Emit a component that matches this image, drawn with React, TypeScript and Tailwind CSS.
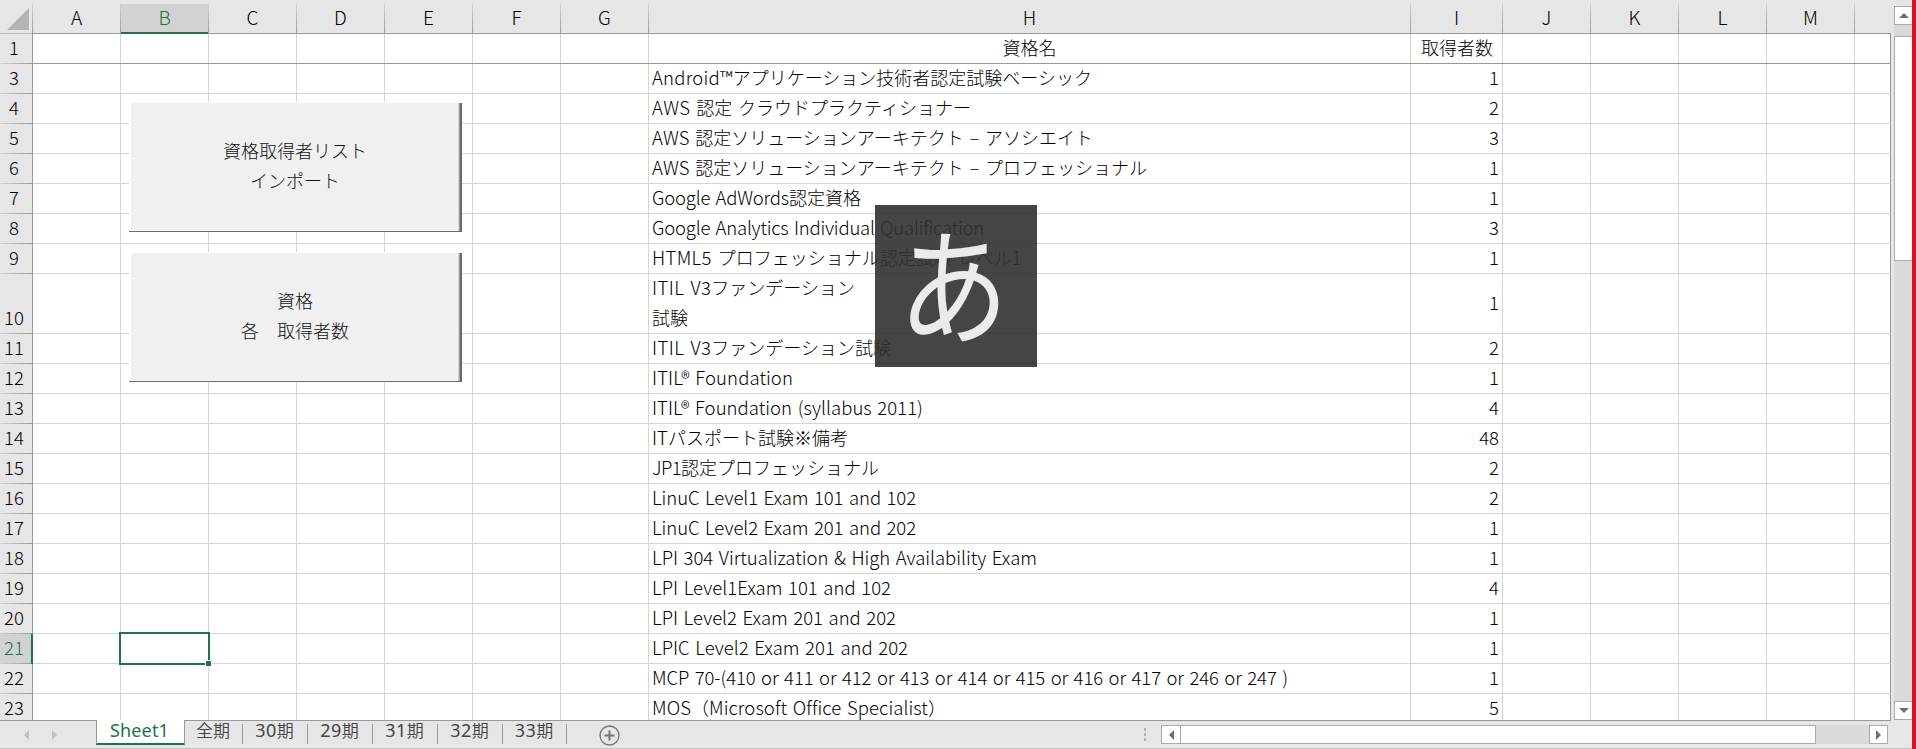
import { useLayoutEffect, useRef } from "react";

type Row = { n: number; name: string[]; widths: number[]; count: number };

const LATIN = /([\u0020-\u007e\u00ae\u2122\u2013]+)/;

const rows: Row[] = [
  { n: 3, name: ["Android™アプリケーション技術者認定試験ベーシック"], widths: [440], count: 1 },
  { n: 4, name: ["AWS 認定 クラウドプラクティショナー"], widths: [319], count: 2 },
  { n: 5, name: ["AWS 認定ソリューションアーキテクト – アソシエイト"], widths: [441], count: 3 },
  { n: 6, name: ["AWS 認定ソリューションアーキテクト – プロフェッショナル"], widths: [495], count: 1 },
  { n: 7, name: ["Google AdWords認定資格"], widths: [209], count: 1 },
  { n: 8, name: ["Google Analytics Individual Qualification"], widths: [332], count: 3 },
  { n: 9, name: ["HTML5 プロフェッショナル認定試験 レベル1"], widths: [370], count: 1 },
  { n: 10, name: ["ITIL V3ファンデーション", "試験"], widths: [203, 36], count: 1 },
  { n: 11, name: ["ITIL V3ファンデーション試験"], widths: [239], count: 2 },
  { n: 12, name: ["ITIL® Foundation"], widths: [141], count: 1 },
  { n: 13, name: ["ITIL® Foundation (syllabus 2011)"], widths: [271], count: 4 },
  { n: 14, name: ["ITパスポート試験※備考"], widths: [196], count: 48 },
  { n: 15, name: ["JP1認定プロフェッショナル"], widths: [227], count: 2 },
  { n: 16, name: ["LinuC Level1 Exam 101 and 102"], widths: [264], count: 2 },
  { n: 17, name: ["LinuC Level2 Exam 201 and 202"], widths: [264], count: 1 },
  { n: 18, name: ["LPI 304 Virtualization & High Availability Exam"], widths: [385], count: 1 },
  { n: 19, name: ["LPI Level1Exam 101 and 102"], widths: [239], count: 4 },
  { n: 20, name: ["LPI Level2 Exam 201 and 202"], widths: [244], count: 1 },
  { n: 21, name: ["LPIC Level2 Exam 201 and 202"], widths: [256], count: 1 },
  { n: 22, name: ["MCP 70-(410 or 411 or 412 or 413 or 414 or 415 or 416 or 417 or 246 or 247 )"], widths: [636], count: 1 },
  { n: 23, name: ["MOS（Microsoft Office Specialist）"], widths: [294], count: 5 },
];

const JP = "font-['Noto_Sans_CJK_JP',sans-serif]";

/* Tracks the Latin runs so that the whole line takes the given advance width. */
function Fit({ text, width, latin }: { text: string; width: number; latin: string }) {
  const ref = useRef<HTMLSpanElement>(null);
  useLayoutEffect(() => {
    const el = ref.current!;
    const runs = Array.from(el.querySelectorAll<HTMLElement>("[data-latin]"));
    runs.forEach((r) => (r.style.letterSpacing = "0px"));
    const count = runs.reduce((s, r) => s + r.textContent!.length, 0);
    if (!count) return;
    const gap = (width - el.getBoundingClientRect().width) / count;
    runs.forEach((r) => (r.style.letterSpacing = `${gap}px`));
  }, [text, width]);
  return (
    <span ref={ref} className="inline-block whitespace-pre">
      {text.split(LATIN).map((part, i) =>
        i % 2 ? (
          <span key={i} data-latin className={latin}>{part}</span>
        ) : (
          <span key={i}>{part}</span>
        ),
      )}
    </span>
  );
}

function ColHead({ label, cls, active }: { label: string; cls: string; active?: boolean }) {
  return (
    <div className={`flex h-full shrink-0 pt-1 ${cls}`}>
      <div
        className={`flex flex-1 items-start justify-center text-[19px] leading-[26px] ${
          active ? "border-b-2 border-[#217346] bg-[#d2d2d2] text-[#217346]" : "border-b border-[#999] text-black"
        }`}
      >
        {label}
      </div>
      <div className="w-px bg-linear-to-b from-[#d0d0d0] to-[#999]" />
    </div>
  );
}

function RowHead({ n, active, last }: { n: number; active?: boolean; last?: boolean }) {
  return (
    <div
      className={`flex w-[33px] shrink-0 flex-col ${
        active ? "border-r-2 border-[#217346] bg-[#d2d2d2] text-[#217346]" : "border-r border-[#999] bg-[#e6e6e6] text-black"
      }`}
    >
      <div className={`flex flex-1 justify-center text-[18.5px] leading-[26px] ${active ? "pr-[3px]" : "pr-[4px]"} ${n === 10 ? "items-end pb-[3px]" : "items-start"}`}>
        {n}
      </div>
      {!last && <div className="h-px bg-linear-to-r from-[#d0d0d0] to-[#999]" />}
    </div>
  );
}

function Blank({ cls }: { cls: string }) {
  return <div className={`h-full shrink-0 border-r border-[#d4d4d4] ${cls}`} />;
}

function PushButton({ lines, cls }: { lines: string[]; cls: string }) {
  return (
    <button
      className={`absolute left-[129px] flex h-[130px] w-[333px] border-t border-b border-t-white border-b-[#696969] bg-[#f0f0f0] ${JP} text-[18px] font-light text-[#111] ${cls}`}
    >
      <span className="h-full w-[2px] bg-white" />
      <span className="flex h-full flex-1 flex-col items-center justify-center border-b border-[#fafafa] pb-[4px] pl-[2px] leading-[30px]">
        {lines.map((l) => (
          <span key={l} className="whitespace-pre">{l}</span>
        ))}
      </span>
      <span className="h-full w-px bg-[#f8f8f8]" />
      <span className="h-full w-px bg-[#d0d0d0]" />
      <span className="h-full w-px bg-[#a0a0a0]" />
      <span className="h-full w-[2px] bg-[#696969]" />
    </button>
  );
}

const tabs = [
  { label: "全期", w: 34, cls: "w-[58px]" },
  { label: "30期", w: 38.5, cls: "w-[65px]" },
  { label: "29期", w: 38.5, cls: "w-[65px]" },
  { label: "31期", w: 38.5, cls: "w-[65px]" },
  { label: "32期", w: 38.5, cls: "w-[65px]" },
  { label: "33期", w: 38.5, cls: "w-[64px]" },
];

export default function App() {
  return (
    <div className={`relative flex h-[749px] w-[1916px] overflow-hidden bg-[#e6e6e6] ${JP} font-light`}>
      <div className="flex h-full min-w-0 flex-1 flex-col">
        <div className="flex h-[721px]">
          <div className="flex w-[1891px] shrink-0 flex-col">
            {/* Column headers */}
            <div className="flex h-[34px] shrink-0">
              <div className="flex w-[33px] shrink-0 pt-1">
                <div className="flex-1 border-b border-[#bbb]">
                  <svg className="mt-1 ml-[7px] block" width="22" height="22">
                    <path d="M22 0V22H0Z" fill="#b4b4b4" />
                  </svg>
                </div>
                <div className="w-px bg-linear-to-b from-[#d0d0d0] to-[#999]" />
              </div>
              {["A", "B", "C", "D", "E", "F", "G"].map((c) => (
                <ColHead key={c} label={c} cls="w-[88px]" active={c === "B"} />
              ))}
              <ColHead label="H" cls="w-[762px]" />
              <ColHead label="I" cls="w-[92px]" />
              {["J", "K", "L", "M"].map((c) => (
                <ColHead key={c} label={c} cls="w-[88px]" />
              ))}
              <div className="h-full flex-1 border-b border-[#999]" />
            </div>

            {/* Frozen first row */}
            <div className="flex h-[30px] shrink-0">
              <RowHead n={1} />
              <div className="flex flex-1 border-r border-b border-[#999] bg-white">
                {[0, 1, 2, 3, 4, 5, 6].map((i) => (
                  <Blank key={i} cls="w-[88px]" />
                ))}
                <div className="flex h-full w-[762px] items-center justify-center border-r border-[#d4d4d4] pb-[3px] text-[18px] leading-none">
                  資格名
                </div>
                <div className="flex h-full w-[92px] items-center justify-center border-r border-[#d4d4d4] pb-[3px] pl-px text-[18px] leading-none">
                  取得者数
                </div>
                {[0, 1, 2, 3].map((i) => (
                  <Blank key={i} cls="w-[88px]" />
                ))}
              </div>
            </div>

            {/* Data rows */}
            {rows.map((r) => {
              const last = r.n === 23;
              return (
                <div key={r.n} className={`flex shrink-0 ${r.n === 10 ? "h-[60px]" : last ? "h-[26px]" : "h-[30px]"}`}>
                  <RowHead n={r.n} active={r.n === 21} last={last} />
                  <div className={`flex min-w-0 flex-1 border-r border-r-[#999] bg-white ${last ? "" : "border-b border-b-[#d4d4d4]"}`}>
                    {[0, 1, 2, 3, 4, 5, 6].map((i) => (
                      <Blank key={i} cls="w-[88px]" />
                    ))}
                    <div className="h-full w-[762px] shrink-0 border-r border-[#d4d4d4] pl-[3px] text-[18px] text-black">
                      {r.name.map((t, i) => (
                        <div key={t} className="h-[30px] leading-[27px]">
                          <Fit text={t} width={r.widths[i]} latin="text-[18.5px] leading-none [word-spacing:1.5px]" />
                        </div>
                      ))}
                    </div>
                    <div className={`flex h-full w-[92px] shrink-0 justify-end border-r border-[#d4d4d4] pr-[3px] text-[18.5px] leading-[26px] text-black ${r.n === 10 ? "items-center pb-[3px]" : "items-start"}`}>
                      {r.count}
                    </div>
                    {[0, 1, 2, 3].map((i) => (
                      <Blank key={i} cls="w-[88px]" />
                    ))}
                  </div>
                </div>
              );
            })}
            <div className="h-px shrink-0 bg-[#999]" />
          </div>

          {/* Vertical scroll bar */}
          <div className="ml-[3px] flex w-[18px] flex-col overflow-hidden pt-[6px]">
            <div className="flex h-[19px] w-[20px] shrink-0 items-center justify-center border border-[#ababab] bg-white">
              <svg width="10" height="5" className="-ml-px"><path d="M5 0L10 5H0Z" fill="#6f6f6f" /></svg>
            </div>
            <div className="h-[11px] shrink-0 bg-[#dadada]" />
            <div className="h-[225px] w-[20px] shrink-0 border border-[#ababab] bg-white" />
            <div className="flex-1 bg-[#dadada]" />
            <div className="mb-px flex h-[19px] w-[20px] shrink-0 items-center justify-center border border-[#ababab] bg-white">
              <svg width="10" height="5" className="-ml-px"><path d="M0 0H10L5 5Z" fill="#6f6f6f" /></svg>
            </div>
          </div>
        </div>

        {/* Sheet tabs */}
        <div className="flex h-[28px] border-b border-[#c6c6c6]">
          <div className="flex w-[96px] shrink-0 items-start gap-[23px] pt-[9px] pl-[24px]">
            <svg width="5" height="10"><path d="M5 0V10L0 5Z" fill="#c0c0c0" /></svg>
            <svg width="5" height="10"><path d="M0 0V10L5 5Z" fill="#c0c0c0" /></svg>
          </div>
          <div className="-mt-px flex h-[25px] w-[89px] shrink-0 items-start justify-center border-x border-b-2 border-x-[#999] border-b-[#217346] bg-white pr-[2px] font-['Noto_Sans',sans-serif] text-[18px] leading-[21px] text-[#217346]">
            <Fit text="Sheet1" width={59} latin="font-normal" />
          </div>
          {tabs.map((t) => (
            <div key={t.label} className={`flex h-[23px] shrink-0 ${t.cls}`}>
              <div className="flex flex-1 items-start justify-center pr-px text-[17px] leading-[17px] font-[350] text-[#444]">
                <Fit text={t.label} width={t.w} latin="text-[18px] leading-none font-['Noto_Sans',sans-serif] font-normal" />
              </div>
              <div className="mt-[3px] w-px bg-[#999]" />
            </div>
          ))}
          <svg className="mt-[4px] ml-[32px] block shrink-0" width="21" height="21" fill="none" stroke="#777">
            <circle cx="10.5" cy="10.5" r="9.5" strokeWidth="1.3" />
            <path d="M10.5 5.5V15.5M5.5 10.5H15.5" strokeWidth="2" />
          </svg>
          <div className="flex-1" />
          <div className="mt-[7px] mr-[15px] flex w-[2px] flex-col gap-[2px]">
            <span className="h-[3px] bg-[#b0b0b0]" />
            <span className="h-[3px] bg-[#b0b0b0]" />
            <span className="h-[3px] bg-[#b0b0b0]" />
          </div>
          <div className="mt-[4px] mr-[24px] flex h-[19px] w-[727px] shrink-0 bg-[#dadada]">
            <div className="flex w-[19px] items-center justify-center border border-r-0 border-[#ababab] bg-white">
              <svg width="5" height="10"><path d="M5 0V10L0 5Z" fill="#6f6f6f" /></svg>
            </div>
            <div className="w-[636px] border border-[#ababab] bg-white" />
            <div className="flex-1" />
            <div className="flex w-[19px] items-center justify-center border border-[#ababab] bg-white">
              <svg width="5" height="10"><path d="M0 0V10L5 5Z" fill="#6f6f6f" /></svg>
            </div>
          </div>
        </div>
      </div>
      <div className="h-full w-[4px] shrink-0 bg-[#d41426]" />

      {/* Form buttons floating over the cells */}
      <PushButton cls="top-[102px]" lines={["資格取得者リスト", "インポート"]} />
      <PushButton cls="top-[252px]" lines={["資格", "各　取得者数"]} />

      {/* Cell selection */}
      <div className="absolute top-[632px] left-[119px] h-[33px] w-[91px] border-2 border-[#217346]" />
      <div className="absolute top-[660px] left-[205px] h-[7px] w-[7px] border border-white bg-[#217346]" />

      {/* Input mode indicator */}
      <div className="absolute top-[205px] left-[875px] flex h-[162px] w-[162px] items-center justify-center bg-[rgb(49,49,49)]/90 pr-[5px] pb-[12px]">
        <span className="scale-x-[.87] text-[127px] leading-none font-normal text-[#ebebeb]">あ</span>
      </div>
    </div>
  );
}
